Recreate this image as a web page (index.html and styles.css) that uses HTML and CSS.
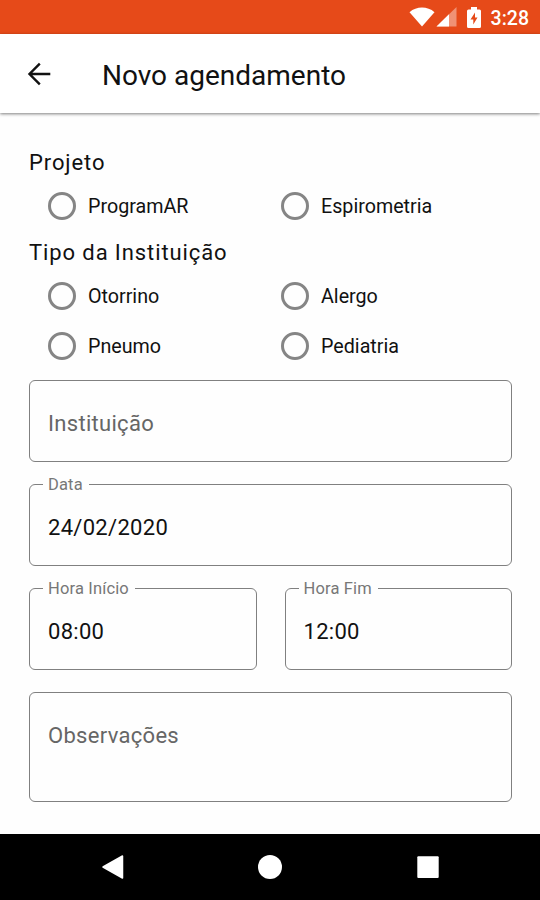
FILE: index.html
```html
<!DOCTYPE html>
<html lang="pt-BR">
<head>
  <meta charset="UTF-8" />
  <meta name="viewport" content="width=device-width, initial-scale=1.0" />
  <title>Novo agendamento</title>
  <link rel="stylesheet" href="styles.css">
</head>
<body>
  <div class="status-bar">
    <svg class="wifi" width="26" height="20" viewBox="0 0 26 20">
      <path d="M0.5 5.2C7.5-1 18.500-1 25.500 5.200L13 19.500z" fill="#fff" />
    </svg>
    <svg class="signal" width="21" height="20" viewBox="0 0 21 20">
      <path d="M20.500 0v19.500H0.500z" fill="#fff" opacity="0.4" />
      <path d="M13 7.200v12.300H0.500z" fill="#fff" />
    </svg>
    <svg class="battery" width="14" height="21" viewBox="0 0 14 21">
      <path d="M4 0h6v2.500h2.500q1.500 0 1.500 1.500v15.500q0 1.500-1.500 1.500h-11Q0 21 0 19.500V4q0-1.500 1.500-1.500H4z" fill="#fff" />
      <path d="M8 5.500L3.500 12.500H6.300V17.500L10.500 10.500H8z" fill="#e64a19" />
    </svg>
    <span class="time">3:28</span>
  </div>

  <header class="toolbar">
    <svg class="back" width="24" height="24" viewBox="0 0 24 24">
      <path d="M23.300 12H2.500M12.800 1.700L2.500 12l10.300 10.300" fill="none" stroke="#111" stroke-width="2.400" />
    </svg>
    <h1>Novo agendamento</h1>
  </header>

  <form class="form">
    <h2>Projeto</h2>
    <div class="options">
      <label class="option"><input type="radio" name="projeto" />ProgramAR</label>
      <label class="option"><input type="radio" name="projeto" />Espirometria</label>
    </div>

    <h2>Tipo da Instituição</h2>
    <div class="options">
      <label class="option"><input type="radio" name="tipo" />Otorrino</label>
      <label class="option"><input type="radio" name="tipo" />Alergo</label>
      <label class="option"><input type="radio" name="tipo" />Pneumo</label>
      <label class="option"><input type="radio" name="tipo" />Pediatria</label>
    </div>

    <div class="fields">
      <div class="field empty">Instituição</div>
      <div class="field">
        <span class="label">Data</span>
        24/02/2020
      </div>
      <div class="field-row">
        <div class="field">
          <span class="label">Hora Início</span>
          08:00
        </div>
        <div class="field">
          <span class="label">Hora Fim</span>
          12:00
        </div>
      </div>
      <div class="field empty notes">Observações</div>
    </div>
  </form>

  <nav class="nav-bar">
    <svg width="26" height="26" viewBox="0 0 26 26">
      <path d="M23.500 2v22L4 13z" fill="#fff" stroke="#fff" stroke-width="1.500" stroke-linejoin="round" />
    </svg>
    <svg width="26" height="26" viewBox="0 0 26 26">
      <circle cx="13" cy="13" r="12" fill="#fff" />
    </svg>
    <svg width="26" height="26" viewBox="0 0 26 26">
      <rect x="2.300" y="2.300" width="21.400" height="21.700" rx="1" fill="#fff" />
    </svg>
  </nav>
</body>
</html>
```

FILE: styles.css
```css
* {
  box-sizing: border-box;
}

body {
  margin: 0;
  height: 900px;
  display: flex;
  flex-direction: column;
  background: #fefefe;
  color: #111;
  font-family: Roboto, "Liberation Sans", sans-serif;
}

.status-bar {
  height: 34px;
  display: flex;
  align-items: center;
  justify-content: flex-end;
  padding-right: 11px;
  background: #e64a19;
  color: #fff;
}

.signal {
  margin-left: 1px;
}

.battery {
  margin-left: 10px;
}

.time {
  margin-left: 10px;
  padding-top: 3px;
  font-size: 19.5px;
  font-weight: 500;
}

.toolbar {
  height: 79px;
  display: flex;
  align-items: center;
  padding-left: 27px;
  background: #fff;
  box-shadow: 0 1px 3px rgba(0, 0, 0, 0.5);
}

.toolbar h1 {
  margin: 3px 0 0 51px;
  font-size: 28px;
  font-weight: 400;
}

.form {
  flex: 1;
  padding: 28px 28px 0 29px;
}

.form h2 {
  display: flex;
  align-items: center;
  height: 40px;
  margin: 0;
  padding-top: 2px;
  font-size: 22px;
  font-weight: 400;
  letter-spacing: 0.9px;
}

.options {
  display: grid;
  grid-template-columns: 233px 1fr;
  grid-auto-rows: 50px;
  padding-left: 19px;
}

.option {
  display: flex;
  align-items: center;
  font-size: 19.7px;
}

.option input {
  appearance: none;
  width: 28px;
  height: 28px;
  margin: 0 12px 0 0;
  border: 3px solid #858585;
  border-radius: 50%;
}

.fields {
  display: flex;
  flex-direction: column;
  gap: 22px;
  padding-top: 9px;
}

.field {
  position: relative;
  flex: 1;
  height: 82px;
  padding: 29px 19px 0 18px;
  border: 1px solid #808080;
  border-radius: 6px;
  font-size: 22px;
  line-height: 28px;
  letter-spacing: 0.3px;
}

.fields > .field {
  flex: none;
}

.empty {
  color: #666;
}

.fields .notes {
  height: 110px;
}

.label {
  position: absolute;
  top: -10px;
  left: 13px;
  padding: 0 6px 0 5px;
  background: #fefefe;
  color: #777;
  font-size: 16.5px;
  line-height: 20px;
  letter-spacing: 0.15px;
}

.field-row {
  display: flex;
  gap: 28px;
}

.nav-bar {
  height: 66px;
  display: flex;
  align-items: center;
  justify-content: center;
  gap: 132px;
  background: #000;
}
```
